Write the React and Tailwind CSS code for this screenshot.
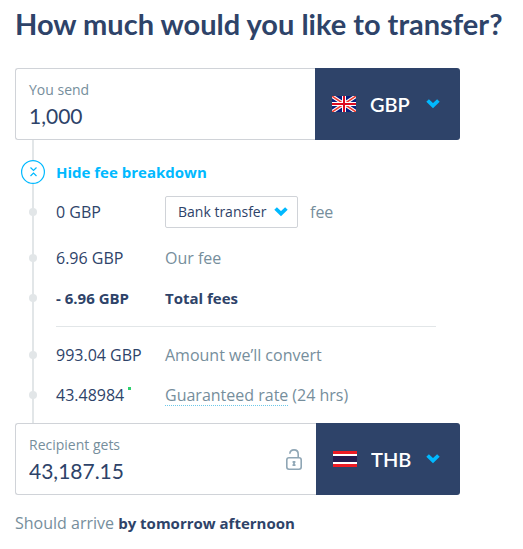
import React, { useState } from "react";

function Chevron() {
  return (
    <svg width="14" height="10" viewBox="0 0 14 10" fill="none" aria-hidden="true">
      <path d="M1.600 1.500 7 6.700l5.400-5.200" stroke="#00b9ff" strokeWidth="3.700" />
    </svg>
  );
}

function FlagGB() {
  return (
    <svg width="24" height="16" viewBox="0 0 24 16" aria-hidden="true">
      <path fill="#0a1f7d" d="M0 0h24v16H0z" />
      <path d="M0 0l24 16M24 0L0 16" stroke="#fff" strokeWidth="3.6" />
      <path d="M0 0l24 16M24 0L0 16" stroke="#ee3b30" strokeWidth="1.5" />
      <path d="M12 0v16M0 8h24" stroke="#fff" strokeWidth="4" />
      <path d="M12 0v16M0 8h24" stroke="#dc0a20" strokeWidth="2" />
    </svg>
  );
}

function FlagTH() {
  return (
    <svg width="24" height="16" viewBox="0 0 24 16" aria-hidden="true">
      <path fill="#ed1c24" d="M0 0h24v16H0z" />
      <path fill="#fff" d="M0 3h24v10H0z" />
      <path fill="#241d4f" d="M0 5h24v6H0z" />
    </svg>
  );
}

function Padlock() {
  return (
    <svg width="16" height="21" viewBox="0 0 16 21" fill="none" stroke="#8fa6b5" aria-hidden="true">
      <rect x="0.8" y="8.8" width="14.4" height="11.4" rx="2.2" strokeWidth="1.6" />
      <path d="M3.8 4.8C4 2.4 5.600.9 8 .9c2.600 0 4.200 1.700 4.200 4.300v3.400" strokeWidth="1.6" />
      <path d="M6.500 13h3M8 12v5M6.500 16.200h3" strokeWidth="1.700" />
    </svg>
  );
}

function MoneyField({ id, label, value, onChange, currency, currencies, flag, icon, panelWidth }) {
  return (
    <div className="flex h-[72px]">
      <div className="flex min-w-0 flex-1 items-center rounded-l-[3px] border border-r-0 border-[#d0d3d8] pl-[13px] pr-[14px]">
        <div className="min-w-0 flex-1 pt-1">
          <label htmlFor={id} className="block text-[14px] leading-5 text-[#768e9c]">{label}</label>
          <input
            id={id}
            value={value}
            onChange={onChange}
            className="block h-8 w-full bg-transparent font-['Lato',sans-serif] text-[21px] leading-8 text-[#2e4369] outline-none"
          />
        </div>
        {icon}
      </div>
      <div className={"relative shrink-0 " + panelWidth}>
        <select
          aria-label={label + " currency"}
          defaultValue={currency}
          className="h-full w-full appearance-none rounded-r-[3px] bg-[#2e4369] pl-[55px] font-['Lato',sans-serif] text-[20px] font-semibold text-white outline-none"
        >
          {currencies.map((c) => (
            <option key={c}>{c}</option>
          ))}
        </select>
        <span className="pointer-events-none absolute inset-y-0 left-[17px] flex items-center">{flag}</span>
        <span className="pointer-events-none absolute inset-y-0 right-5 flex items-center">
          <Chevron />
        </span>
      </div>
    </div>
  );
}

function FeeRow({ amount, children, className = "" }) {
  return (
    <li className={"flex h-10 items-center text-[#768e9c] " + className}>
      <span className="ml-[14px] size-2 shrink-0 rounded-full bg-[#e2e6e8]" />
      <span className="ml-[19px] w-[109px] shrink-0 text-[#2e4369]">{amount}</span>
      <span className="flex items-center whitespace-nowrap">{children}</span>
    </li>
  );
}

export default function App() {
  const [amount, setAmount] = useState("1,000");
  const [received, setReceived] = useState("43,187.15");
  const [open, setOpen] = useState(true);

  return (
    <main className="bg-white px-[15px] pb-3 pt-1 font-['Open_Sans','Noto_Sans',sans-serif] text-[16px] leading-6 text-[#2e4369]">
      <h1 className="whitespace-nowrap font-['Lato',sans-serif] text-[29px] font-bold leading-10">
        How much would you like to transfer?
      </h1>
      <form className="mt-6 max-w-[445px]">
        <MoneyField
          id="send"
          label="You send"
          value={amount}
          onChange={(e) => setAmount(e.target.value)}
          currency="GBP"
          currencies={["GBP", "EUR", "USD"]}
          flag={<FlagGB />}
          panelWidth="w-[145px]"
        />
        <div className="relative pb-2 pt-5">
          <span className="absolute inset-y-0 left-[17px] w-0.5 bg-[#e2e6e8]" />
          <div className="relative">
            <button
              type="button"
              aria-expanded={open}
              onClick={() => setOpen(!open)}
              className="ml-[6px] flex items-center gap-[11px] text-[15px] font-bold leading-6 text-[#00b9ff]"
            >
              <svg width="24" height="24" viewBox="0 0 24 24" fill="none" stroke="#00b9ff" aria-hidden="true">
                <circle cx="12" cy="12" r="11.400" fill="#fff" strokeWidth="1.200" />
                <path d="M9.500 7.500l3 3 3-3M9.500 16l3-3 3 3" strokeWidth="1.200" />
              </svg>
              Hide fee breakdown
            </button>
            {open && (
              <ul className="mt-2">
                <FeeRow amount="0 GBP" className="mb-1.5">
                  <span className="relative">
                    <select
                      aria-label="Payment method"
                      className="block h-8 w-[133px] appearance-none rounded-[2px] border border-[#d0d3d8] bg-white pl-3 text-[14px] text-[#2e4369] outline-none"
                    >
                      <option>Bank transfer</option>
                      <option>Debit card</option>
                      <option>Credit card</option>
                    </select>
                    <span className="pointer-events-none absolute inset-y-0 right-[10px] flex items-center">
                      <Chevron />
                    </span>
                  </span>
                  <span className="ml-3">fee</span>
                </FeeRow>
                <FeeRow amount="6.96 GBP">Our fee</FeeRow>
                <FeeRow amount={<b className="text-[15px] font-bold">- 6.96 GBP</b>}>
                  <b className="text-[15px] font-bold text-[#2e4369]">Total fees</b>
                </FeeRow>
                <li className="mx-0 mb-2 ml-[41px] mr-6 mt-2 border-t border-[#e2e6e8]" />
                <FeeRow amount="993.04 GBP">Amount we’ll convert</FeeRow>
                <FeeRow
                  amount={
                    <span className="flex gap-1">
                      43.48984
                      <span className="mt-1 size-[3px] bg-[#2ed06e]" />
                    </span>
                  }
                >
                  <a href="#rate" className="mr-1 border-b border-dotted border-[#6cc8e8] leading-5">
                    Guaranteed rate
                  </a>
                  (24 hrs)
                </FeeRow>
              </ul>
            )}
          </div>
        </div>
        <MoneyField
          id="receive"
          label="Recipient gets"
          value={received}
          onChange={(e) => setReceived(e.target.value)}
          currency="THB"
          currencies={["THB", "EUR", "USD"]}
          flag={<FlagTH />}
          icon={<Padlock />}
          panelWidth="w-36"
        />
      </form>
      <p className="mt-4 text-[#768e9c]">
        Should arrive <b className="text-[15px] font-bold text-[#2e4369]">by tomorrow afternoon</b>
      </p>
    </main>
  );
}
